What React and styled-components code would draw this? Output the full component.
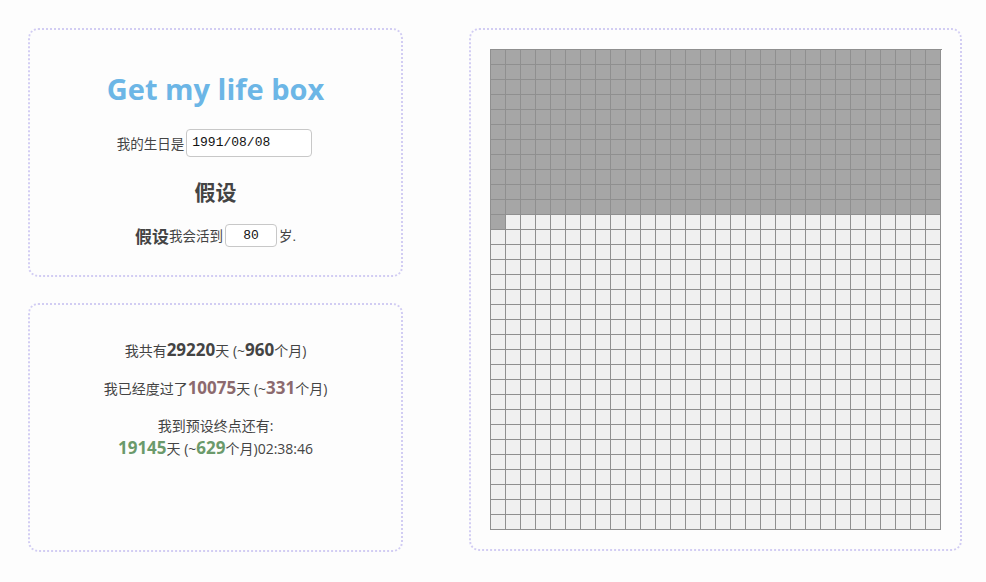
import React from "react";
import styled, { createGlobalStyle } from "styled-components";

const GlobalStyle = createGlobalStyle`
  html, body {
    margin: 0;
    padding: 0;
    background: #fdfdfd;
  }
  body {
    font-family: "Open Sans", "Noto Sans CJK SC", sans-serif;
    color: #444;
  }
`;

const TOTAL_MONTHS = 960;
const LIVED_MONTHS = 331;

const Page = styled.div`
  display: flex;
  gap: 66px;
  padding: 28px 0 0 28px;
  width: 986px;
  height: 582px;
  box-sizing: border-box;
`;

const Column = styled.div`
  display: flex;
  flex-direction: column;
  gap: 26px;
  width: 375px;
`;

const Card = styled.div`
  border: 2px dotted #d2cdf3;
  border-radius: 10px;
  box-sizing: border-box;
  height: ${(p) => p.$h}px;
  width: ${(p) => p.$w}px;
  display: flex;
  flex-direction: column;
  align-items: center;
  padding-top: ${(p) => p.$pt || 0}px;
`;

const Title = styled.h1`
  margin: 0 0 22px;
  font-size: 29px;
  font-weight: 700;
  color: #6cb6e6;
  line-height: 1.2;
`;

const Row = styled.div`
  display: flex;
  align-items: center;
  font-size: 13.5px;
  color: #444;
`;

const TextInput = styled.input`
  width: ${(p) => p.$w}px;
  height: ${(p) => p.$h}px;
  box-sizing: border-box;
  border: 1px solid #c8c8c8;
  border-radius: 4px;
  margin: 0 2px;
  padding: 0 5px;
  font-family: "Liberation Mono", "DejaVu Sans Mono", monospace;
  font-size: 13px;
  color: #111;
  text-align: ${(p) => p.$align || "left"};
  background: #fff;
`;

const SubTitle = styled.h2`
  margin: 23px 0 18px;
  font-size: 21px;
  font-weight: 700;
  color: #444;
  line-height: 1.2;
`;

const Strong = styled.b`
  font-size: 17px;
  font-weight: 700;
  color: ${(p) => p.$c || "#444"};
`;

const Stat = styled.p`
  margin: 0;
  font-size: 14px;
  line-height: 22px;
  margin-bottom: ${(p) => p.$mb || 0}px;
  text-align: center;
  color: #444;
`;

const Grid = styled.div`
  display: grid;
  grid-template-columns: repeat(30, 15px);
  border-top: 1px solid #8f8f8f;
  border-left: 1px solid #8f8f8f;
  width: 451px;
  margin: 19px 0 0 0;
`;

const Cell = styled.div`
  width: 15px;
  height: 15px;
  box-sizing: border-box;
  border-right: 1px solid #8f8f8f;
  border-bottom: 1px solid #8f8f8f;
  background: ${(p) => (p.$lived ? "#a6a6a6" : "#f0f0f0")};
`;

const App = () => {
  const cells = [];
  for (let i = 0; i < TOTAL_MONTHS; i++) {
    cells.push(<Cell key={i} $lived={i < LIVED_MONTHS} />);
  }

  return (
    <>
      <GlobalStyle />
      <Page>
        <Column>
          <Card $w={375} $h={249} $pt={42}>
            <Title>Get my life box</Title>
            <Row>
              我的生日是
              <TextInput $w={126} $h={28} defaultValue="1991/08/08" />
            </Row>
            <SubTitle>假设</SubTitle>
            <Row>
              <Strong>假设</Strong>我会活到
              <TextInput $w={52} $h={23} $align="center" defaultValue="80" />
              岁.
            </Row>
          </Card>
          <Card $w={375} $h={249} $pt={34}>
            <Stat $mb={15}>
              我共有<Strong>29220</Strong>天 (~<Strong>960</Strong>个月)
            </Stat>
            <Stat $mb={15}>
              我已经度过了<Strong $c="#8c6a6e">10075</Strong>天 (~
              <Strong $c="#8c6a6e">331</Strong>个月)
            </Stat>
            <Stat>我到预设终点还有:</Stat>
            <Stat>
              <Strong $c="#6b9a6b">19145</Strong>天 (~
              <Strong $c="#6b9a6b">629</Strong>个月)02:38:46
            </Stat>
          </Card>
        </Column>
        <Card $w={493} $h={523}>
          <Grid>{cells}</Grid>
        </Card>
      </Page>
    </>
  );
};

export default App;
